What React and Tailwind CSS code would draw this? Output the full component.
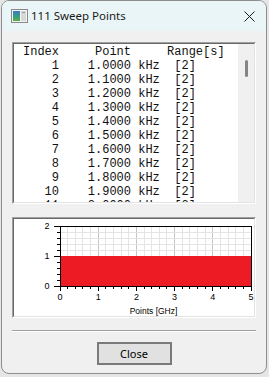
import React from "react";

const rows = Array.from({ length: 11 }, (_, i) => ({
  index: i + 1,
  point: (1 + i * 0.1).toFixed(4),
}));

function WindowIcon() {
  return (
    <svg width="17" height="14" viewBox="0 0 17 14">
      <defs>
        <linearGradient id="pic" x1="0" y1="0" x2="0" y2="1">
          <stop offset="0" stopColor="#3b7bc4" />
          <stop offset="0.6" stopColor="#3aa07a" />
          <stop offset="1" stopColor="#5fb04a" />
        </linearGradient>
      </defs>
      <rect x="0.5" y="0.5" width="16" height="13" fill="#f4f4f4" stroke="#8a8a8a" />
      <rect x="2" y="2" width="7" height="10" fill="url(#pic)" />
      <rect x="10" y="2" width="5" height="10" fill="#d8d8d8" />
      <rect x="11" y="3" width="3" height="1" fill="#9a9a9a" />
    </svg>
  );
}

function Chart() {
  // plot frame, local to the white area of the chart box
  const x0 = 46;
  const y0 = 7;
  const w = 191;
  const h = 60;
  const xs = (v) => x0 + (v / 5) * w;
  const ys = (v) => y0 + h - (v / 2) * h;
  const minorX = Array.from({ length: 26 }, (_, i) => i * 0.2);
  const minorY = Array.from({ length: 11 }, (_, i) => i * 0.2);

  return (
    <svg width="241" height="97" viewBox="0 0 241 97" className="block">
      {minorX.map((v, i) => (
        <line
          key={"gx" + i}
          x1={xs(v)}
          x2={xs(v)}
          y1={y0}
          y2={y0 + h}
          stroke={i % 5 === 0 ? "#c4c4c4" : "#e4e4e4"}
          strokeWidth="1"
          shapeRendering="crispEdges"
        />
      ))}
      {minorY.map((v, i) => (
        <line
          key={"gy" + i}
          x1={x0}
          x2={x0 + w}
          y1={ys(v)}
          y2={ys(v)}
          stroke={i % 5 === 0 ? "#c4c4c4" : "#e4e4e4"}
          strokeWidth="1"
          shapeRendering="crispEdges"
        />
      ))}
      <rect x={x0} y={ys(1)} width={w} height={ys(0) - ys(1)} fill="#ed1c24" />
      <rect
        x={x0}
        y={y0}
        width={w}
        height={h}
        fill="none"
        stroke="#000"
        strokeWidth="1"
        shapeRendering="crispEdges"
      />
      {minorX.map((v, i) => (
        <line
          key={"tx" + i}
          x1={xs(v)}
          x2={xs(v)}
          y1={y0 + h}
          y2={y0 + h + (i % 5 === 0 ? 5 : 3)}
          stroke="#000"
          shapeRendering="crispEdges"
        />
      ))}
      {minorY.map((v, i) => (
        <line
          key={"ty" + i}
          x1={x0 - (i % 5 === 0 ? 6 : 3)}
          x2={x0}
          y1={ys(v)}
          y2={ys(v)}
          stroke="#000"
          shapeRendering="crispEdges"
        />
      ))}
      {[0, 1, 2].map((v) => (
        <text
          key={"ly" + v}
          x={x0 - 13}
          y={ys(v) + 3}
          fontSize="9"
          fontFamily="'Liberation Sans', Arial, sans-serif"
          textAnchor="middle"
          fill="#000"
        >
          {v}
        </text>
      ))}
      {[0, 1, 2, 3, 4, 5].map((v) => (
        <text
          key={"lx" + v}
          x={xs(v)}
          y={y0 + h + 14}
          fontSize="9"
          fontFamily="'Liberation Sans', Arial, sans-serif"
          textAnchor="middle"
          fill="#000"
        >
          {v}
        </text>
      ))}
      <text
        x={x0 + w / 2 - 2}
        y={y0 + h + 28}
        fontSize="8.5"
        fontFamily="'Liberation Sans', Arial, sans-serif"
        textAnchor="middle"
        fill="#000"
      >
        Points [GHz]
      </text>
    </svg>
  );
}

export default function App() {
  return (
    <div className="w-[269px] h-[377px] bg-[#e6e6e6] font-['Noto_Sans',sans-serif] overflow-hidden">
      <div className="ml-[1px] w-[266px] h-[374px] border border-[#8e8e8e] rounded-[8px] overflow-hidden flex flex-col bg-[#f0f0f0]">
        {/* Title bar */}
        <div className="h-[30px] shrink-0 bg-[#eaf5f7] flex items-center pl-[9px] pr-[10px]">
          <WindowIcon />
          <span className="ml-[3px] text-[11.5px] text-[#1a1a1a] leading-none">111 Sweep Points</span>
          <svg width="11" height="11" viewBox="0 0 11 11" className="ml-auto mr-[1px]">
            <path d="M0.5 0.5 L10.5 10.5 M10.5 0.5 L0.5 10.5" stroke="#1a1a1a" strokeWidth="1" />
          </svg>
        </div>

        <div className="flex flex-col px-[10px] pt-[11px]">
          {/* List box */}
          <div className="h-[162px] border border-t-[#a0a0a0] border-l-[#a0a0a0] border-r-[#ffffff] border-b-[#ffffff]">
            <div className="h-full border border-t-[#696969] border-l-[#696969] border-r-[#e3e3e3] border-b-[#e3e3e3] bg-white flex overflow-hidden">
              <div className="flex-1 pl-[9px] pt-[1px] font-['Liberation_Mono',monospace] text-[12px] leading-[14px] text-[#111] whitespace-pre overflow-hidden">
                <div>{"Index     Point     Range[s]"}</div>
                {rows.map((r) => (
                  <div key={r.index}>
                    {String(r.index).padStart(5, " ") + "    " + r.point + " kHz  [2]"}
                  </div>
                ))}
              </div>
              <div className="w-[16px] bg-[#f0f0f0] flex justify-center pt-[16px]">
                <div className="w-[3px] h-[17px] rounded-full bg-[#858585]" />
              </div>
            </div>
          </div>

          {/* Chart box */}
          <div className="mt-[13px] h-[101px] border border-t-[#a0a0a0] border-l-[#a0a0a0] border-r-[#ffffff] border-b-[#ffffff]">
            <div className="h-full border border-t-[#696969] border-l-[#696969] border-r-[#e3e3e3] border-b-[#e3e3e3] bg-white overflow-hidden">
              <Chart />
            </div>
          </div>

          {/* Separator */}
          <div className="mt-[12px] h-[2px] border-t border-t-[#a0a0a0] border-b border-b-[#ffffff]" />

          {/* Button */}
          <div className="mt-[10px] flex justify-center">
            <button className="w-[75px] h-[23px] bg-[#e1e1e1] border-2 border-[#7a7a7a] text-[11px] text-black leading-none">
              Close
            </button>
          </div>
        </div>
      </div>
    </div>
  );
}
